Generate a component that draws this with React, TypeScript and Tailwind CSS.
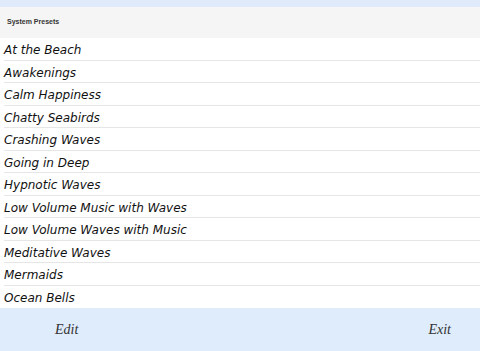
const presets = [
  'At the Beach',
  'Awakenings',
  'Calm Happiness',
  'Chatty Seabirds',
  'Crashing Waves',
  'Going in Deep',
  'Hypnotic Waves',
  'Low Volume Music with Waves',
  'Low Volume Waves with Music',
  'Meditative Waves',
  'Mermaids',
  'Ocean Bells',
];

export default function App() {
  return (
    <div className="w-[480px] h-[351px] flex flex-col bg-white overflow-hidden font-['DejaVu_Sans',sans-serif]">
      <div className="h-[7px] bg-[#dfeafb]" />
      <div className="h-[31px] bg-[#f5f5f5] flex items-center px-[7px]">
        <span className="text-[7px] font-bold text-[#333] font-['Liberation_Sans',sans-serif]">System Presets</span>
      </div>
      <ul className="flex flex-col">
        {presets.map((name, i) => (
          <li key={i} className="h-[22.5px] relative flex items-center pl-[4px] pt-[2px]">
            <span className="italic text-[12px] text-[#111] leading-none">{name}</span>
            {i < presets.length - 1 && (
              <div className="absolute left-[4px] right-0 bottom-0 h-px bg-[#e6e6e6]" />
            )}
          </li>
        ))}
      </ul>
      <div className="flex-1 bg-[#dfecfc] flex items-center justify-between pl-[55px] pr-[29px]">
        <span className="italic text-[14px] text-[#333] font-['Liberation_Serif',serif]">Edit</span>
        <span className="italic text-[14px] text-[#333] font-['Liberation_Serif',serif]">Exit</span>
      </div>
    </div>
  );
}
